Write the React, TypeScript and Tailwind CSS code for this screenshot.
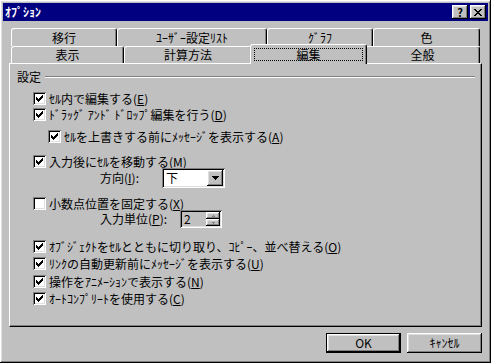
import React from "react";

const raised =
  "shadow-[inset_-1px_-1px_#000,inset_1px_1px_#fff,inset_-2px_-2px_#808080,inset_2px_2px_#dfdfdf]";
const sunken =
  "shadow-[inset_1px_1px_#808080,inset_-1px_-1px_#fff,inset_2px_2px_#000,inset_-2px_-2px_#dfdfdf]";
const tab =
  "flex items-center justify-center bg-[#c0c0c0] border-t border-l border-r border-t-white border-l-white border-r-black rounded-t-[3px] shadow-[inset_-1px_0_#808080]";

const checkPixels = ["......x", ".....xx", "x...xxx", "xx.xxx.", "xxxxx..", ".xxx...", "..x...."];

const CheckMark = () => (
  <svg width="7" height="7" viewBox="0 0 7 7" shapeRendering="crispEdges">
    {checkPixels.map((row, y) =>
      row.split("").map((c, x) => (c === "x" ? <rect key={`${x}-${y}`} x={x} y={y} width="1" height="1" fill="#000" /> : null))
    )}
  </svg>
);

const Check = ({ checked }: { checked: boolean }) => (
  <div className={`w-[13px] h-[13px] shrink-0 bg-white flex items-center justify-center ${sunken}`}>
    {checked && <CheckMark />}
  </div>
);

const Key = ({ k }: { k: string }) => (
  <>
    (<span className="underline underline-offset-1">{k}</span>)
  </>
);

const CheckRow = ({ className, checked = true, children }: { className: string; checked?: boolean; children: React.ReactNode }) => (
  <div className={`flex items-center h-[13px] gap-[3px] ${className}`}>
    <Check checked={checked} />
    <span className="whitespace-nowrap leading-none">{children}</span>
  </div>
);

export default function App() {
  return (
    <div
      className={`w-[491px] h-[363px] bg-[#c0c0c0] flex flex-col text-[12px] text-black font-['Noto_Sans_CJK_JP','Noto_Sans_CJK_SC',sans-serif] ${raised}`}
    >
      {/* title bar */}
      <div className="mx-[3px] mt-[3px] h-[18px] bg-[#000080] flex items-center justify-between pl-[2px] pr-[2px]">
        <span className="text-white font-bold leading-none">ｵﾌﾟｼｮﾝ</span>
        <div className="flex gap-[2px]">
          <div className={`w-[16px] h-[14px] bg-[#c0c0c0] flex items-center justify-center font-bold text-[11px] leading-none ${raised}`}>
            ?
          </div>
          <div className={`w-[16px] h-[14px] bg-[#c0c0c0] flex items-center justify-center ${raised}`}>
            <svg width="8" height="7" viewBox="0 0 8 7" shapeRendering="crispEdges">
              <path d="M0 0h2v1h1v1h2v-1h1v-1h2v1h-1v1h-1v1h-1v1h1v1h1v1h1v1h-2v-1h-1v-1h-2v1h-1v1h-2v-1h1v-1h1v-1h1v-1h-1v-1h-1v-1h-1z" fill="#000" />
            </svg>
          </div>
        </div>
      </div>

      <div className="flex flex-col px-[9px] mt-[7px]">
        {/* back row of tabs */}
        <div className="flex h-[18px] mx-[2px]">
          <div className={`w-[106px] ${tab}`}>移行</div>
          <div className={`w-[150px] ${tab}`}>ﾕｰｻﾞｰ設定ﾘｽﾄ</div>
          <div className={`w-[106px] ${tab}`}>ｸﾞﾗﾌ</div>
          <div className={`w-[107px] ${tab}`}>色</div>
        </div>
        {/* front row of tabs */}
        <div className="flex items-end h-[17px] mx-[2px]">
          <div className={`w-[113px] h-[17px] ${tab}`}>表示</div>
          <div className={`w-[128px] h-[17px] ${tab}`}>計算方法</div>
          <div className={`relative z-10 w-[117px] h-[20px] -mx-[2px] -mb-px flex pt-[3px] px-[3px] pb-[3px] ${tab}`}>
            <div className="flex-1 h-full border border-dotted border-black flex items-center justify-center">編集</div>
          </div>
          <div className={`w-[115px] h-[17px] ${tab}`}>全般</div>
        </div>

        {/* page */}
        <div className="h-[264px] border border-t-white border-l-white border-r-black border-b-black shadow-[inset_-1px_-1px_#808080] flex flex-col">
          <div className="flex items-center h-[13px] mt-[6px] ml-[7px] mr-[6px]">
            <span className="leading-none">設定</span>
            <div className="flex-1 ml-[4px] h-[2px] border-t border-t-[#808080] border-b border-b-white" />
          </div>

          <CheckRow className="mt-[9px] ml-[23px]">
            ｾﾙ内で編集する<Key k="E" />
          </CheckRow>
          <CheckRow className="mt-[3px] ml-[23px]">
            ﾄﾞﾗｯｸﾞ ｱﾝﾄﾞ ﾄﾞﾛｯﾌﾟ編集を行う<Key k="D" />
          </CheckRow>
          <CheckRow className="mt-[9px] ml-[38px]">
            ｾﾙを上書きする前にﾒｯｾｰｼﾞを表示する<Key k="A" />
          </CheckRow>
          <CheckRow className="mt-[12px] ml-[23px]">
            入力後にｾﾙを移動する<Key k="M" />
          </CheckRow>

          <div className="flex items-center h-[20px] ml-[90px]">
            <span className="w-[62px] leading-none">
              方向<Key k="I" />:
            </span>
            <div className={`w-[63px] h-[20px] bg-white flex items-center justify-between pl-[4px] pr-[2px] ${sunken}`}>
              <span className="leading-none">下</span>
              <div className={`w-[16px] h-[16px] bg-[#c0c0c0] flex items-center justify-center ${raised}`}>
                <svg width="7" height="4" viewBox="0 0 7 4" shapeRendering="crispEdges">
                  <path d="M0 0h7v1h-1v1h-1v1h-1v1h-1v-1h-1v-1h-1v-1h-1z" fill="#000" />
                </svg>
              </div>
            </div>
          </div>

          <CheckRow className="mt-[9px] ml-[23px]" checked={false}>
            小数点位置を固定する<Key k="X" />
          </CheckRow>

          <div className="flex items-center h-[18px] ml-[90px]">
            <span className="w-[80px] leading-none">
              入力単位<Key k="P" />:
            </span>
            <div className={`w-[42px] h-[18px] bg-[#c0c0c0] flex items-center justify-between pl-[4px] pr-[2px] ${sunken}`}>
              <span className="leading-none">2</span>
              <div className="flex flex-col">
                <div className={`w-[14px] h-[7px] bg-[#c0c0c0] flex items-center justify-center ${raised}`}>
                  <svg width="3" height="2" viewBox="0 0 3 2" shapeRendering="crispEdges">
                    <path d="M1 0h1v1h1v1h-3v-1h1z" fill="#808080" />
                  </svg>
                </div>
                <div className={`w-[14px] h-[7px] bg-[#c0c0c0] flex items-center justify-center ${raised}`}>
                  <svg width="3" height="2" viewBox="0 0 3 2" shapeRendering="crispEdges">
                    <path d="M0 0h3v1h-1v1h-1v-1h-1z" fill="#808080" />
                  </svg>
                </div>
              </div>
            </div>
          </div>

          <CheckRow className="mt-[12px] ml-[23px]">
            ｵﾌﾞｼﾞｪｸﾄをｾﾙとともに切り取り、ｺﾋﾟｰ、並べ替える<Key k="O" />
          </CheckRow>
          <CheckRow className="mt-[4px] ml-[23px]">
            ﾘﾝｸの自動更新前にﾒｯｾｰｼﾞを表示する<Key k="U" />
          </CheckRow>
          <CheckRow className="mt-[5px] ml-[23px]">
            操作をｱﾆﾒｰｼｮﾝで表示する<Key k="N" />
          </CheckRow>
          <CheckRow className="mt-[4px] ml-[23px]">
            ｵｰﾄｺﾝﾌﾟﾘｰﾄを使用する<Key k="C" />
          </CheckRow>
        </div>

        {/* buttons */}
        <div className="flex justify-end gap-[6px] mt-[6px]">
          <div className="w-[75px] h-[20px] border border-black flex">
            <div className={`flex-1 bg-[#c0c0c0] flex items-center justify-center leading-none ${raised}`}>OK</div>
          </div>
          <div className={`w-[75px] h-[20px] bg-[#c0c0c0] flex items-center justify-center leading-none ${raised}`}>ｷｬﾝｾﾙ</div>
        </div>
      </div>
    </div>
  );
}
